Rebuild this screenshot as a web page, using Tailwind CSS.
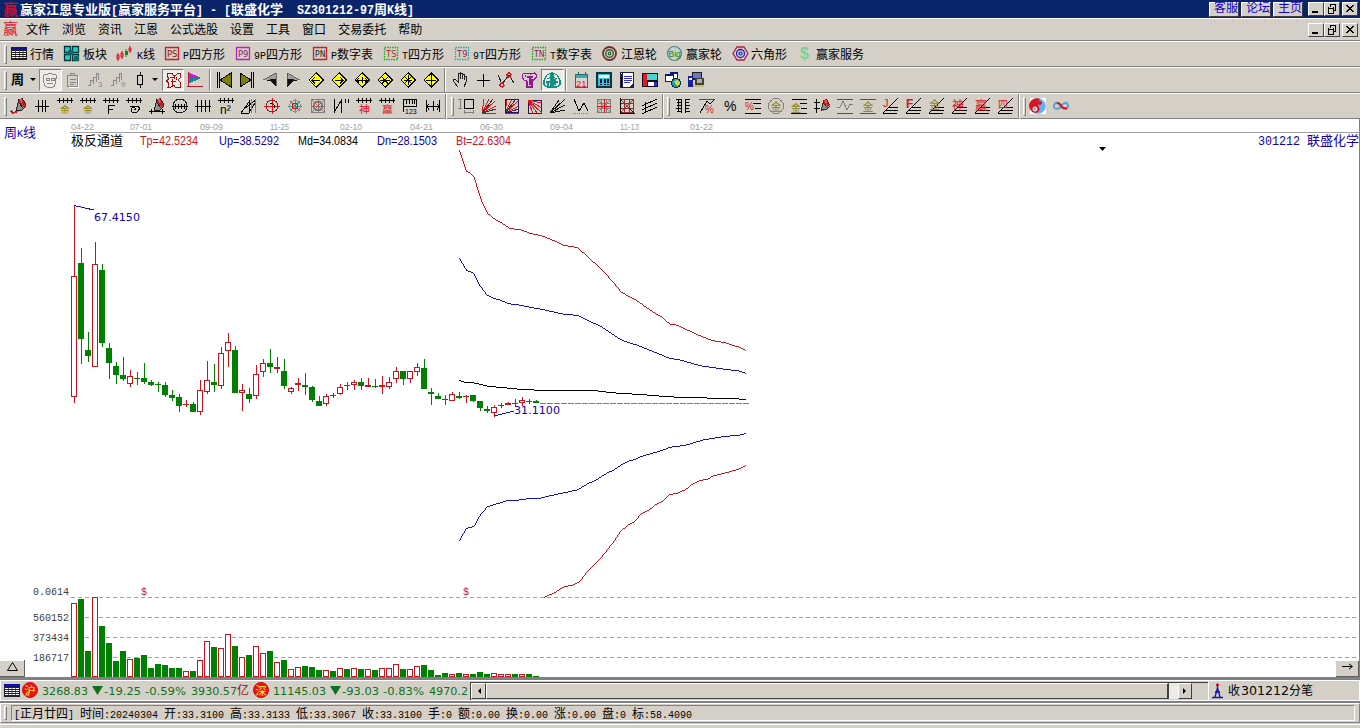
<!DOCTYPE html>
<html lang="zh-CN">
<head>
<meta charset="utf-8">
<title>赢家江恩专业版</title>
<script src="https://cdn.jsdelivr.net/npm/@tailwindcss/browser@4"></script>
</head>
<body class="w-[1360px] h-[728px] overflow-hidden bg-[#d4d0c8] font-['Liberation_Mono','Noto_Sans_CJK_SC',monospace] text-[12px] leading-none text-black">
<div class="flex h-[728px] flex-col">

  <!-- title bar -->
  <header class="flex h-[18px] shrink-0 items-center bg-[#0a246a] pl-[3px] pr-[2px] text-white">
    <svg class="h-[18px] w-[457px] overflow-visible" id="title"></svg>
    <div class="ml-auto flex items-center gap-[2px] text-[12px] leading-[14px] text-[#1400c8]">
      <span class="flex h-[15px] w-[30px] items-center justify-end border border-t-white border-l-white border-r-[#404040] border-b-[#404040] bg-[#d4d0c8]">客服</span>
      <span class="flex h-[15px] w-[30px] items-center justify-end border border-t-white border-l-white border-r-[#404040] border-b-[#404040] bg-[#d4d0c8]">论坛</span>
      <span class="flex h-[15px] w-[30px] items-center justify-end border border-t-white border-l-white border-r-[#404040] border-b-[#404040] bg-[#d4d0c8]">主页</span>
    </div>
    <div class="ml-[5px] flex" data-winbtns></div>
  </header>

  <!-- menu -->
  <nav class="flex h-[23px] shrink-0 items-center border-t border-b border-t-white border-b-[#808080] pl-[3px] pr-[2px]">
    <span class="w-[23px] pt-[2px] text-[15px] text-[#e01030]">赢</span>
    <div class="flex gap-[12px] pt-[3px]">
      <span>文件</span><span>浏览</span><span>资讯</span><span>江恩</span><span>公式选股</span><span>设置</span><span>工具</span><span>窗口</span><span>交易委托</span><span>帮助</span>
    </div>
    <div class="ml-auto flex" data-winbtns></div>
  </nav>

  <!-- module bar -->
  <div class="flex h-[26px] shrink-0 items-center border-t border-b border-t-white border-b-[#808080] pl-[4px]">
    <i class="h-[19px] w-[3px] border border-t-white border-l-white border-r-[#808080] border-b-[#808080]"></i>
    <svg class="h-[24px] w-[1100px] overflow-visible" id="modules"></svg>
  </div>

  <!-- tool rows -->
  <div class="flex h-[26px] shrink-0 items-center border-t border-b border-t-white border-b-[#808080] pl-[4px]">
    <i class="h-[19px] w-[3px] border border-t-white border-l-white border-r-[#808080] border-b-[#808080]"></i>
    <span class="ml-[4px] w-[17px] text-[13px] font-bold">周</span>
    <svg class="ml-[2px] mr-[3px] h-[4px] w-[6px]"><path d="M0 0h6L3 3z"/></svg>
    <span class="flex h-[22px] w-[23px] items-center justify-center border border-t-[#808080] border-l-[#808080] border-r-white border-b-white bg-[#ecebe6]" data-row="ghost"></span>
    <div class="flex" data-row="clip sig3 sig9"></div>
    <div class="-ml-[2px] flex w-[21px]" data-row="candle"></div>
    <svg class="ml-[2px] mr-[4px] h-[4px] w-[6px]"><path d="M0 0h6L3 3z"/></svg>
    <span class="flex h-[22px] w-[22px] items-center justify-center border border-t-[#808080] border-l-[#808080] border-r-white border-b-white bg-[#ecebe6]" data-row="face"></span>
    <div class="flex w-[25px]" data-row="flag"></div>
    <i class="h-[22px] w-[2px] border-l border-r border-l-[#808080] border-r-white"></i>
    <div class="ml-[2px] flex" data-row="first last prev next dl dr dh dx ds dv"></div>
    <i class="ml-[1px] h-[24px] w-[2px] border-l border-r border-l-[#808080] border-r-white"></i>
    <div class="ml-[3px] flex" data-row="hand plus zig robot"></div>
    <span class="flex h-[22px] w-[23px] items-center justify-center border border-t-[#808080] border-l-[#808080] border-r-white border-b-white bg-[#ecebe6]" data-row="brain"></span>
    <i class="ml-[1px] h-[22px] w-[2px] border-l border-r border-l-[#808080] border-r-white"></i>
    <div class="ml-[3px] flex" data-row="cal calc note disk globe pcs"></div>
  </div>

  <div class="flex h-[26px] shrink-0 items-center border-t border-b border-t-white border-b-[#808080] pl-[4px]">
    <i class="h-[19px] w-[3px] border border-t-white border-l-white border-r-[#808080] border-b-[#808080]"></i>
    <div class="ml-[1px] flex" data-row="pen hh goldh goldh2 fh spiral pencil circ hhh n2 tri tgt star web ii shen ying ruler width"></div>
    <i class="h-[25px] w-[2px] border-l border-r border-l-[#808080] border-r-white"></i>
    <i class="ml-[4px] h-[19px] w-[3px] border border-t-white border-l-white border-r-[#808080] border-b-[#808080]"></i>
    <div class="ml-px flex" data-row="box fanr fanbox fanbox2 fan wave grid grid2 chan"></div>
    <i class="h-[25px] w-[2px] border-l border-r border-l-[#808080] border-r-white"></i>
    <i class="ml-[3px] h-[19px] w-[3px] border border-t-white border-l-white border-r-[#808080] border-b-[#808080]"></i>
    <div class="ml-[3px] flex" data-row="bars pctr pct pctl goldc goldl penl wavl goldr lj lf lg ls ly l4"></div>
    <i class="h-[25px] w-[2px] border-l border-r border-l-[#808080] border-r-white"></i>
    <i class="ml-[3px] h-[19px] w-[3px] border border-t-white border-l-white border-r-[#808080] border-b-[#808080]"></i>
    <div class="ml-px flex" data-row="yin inf"></div>
  </div>

  <!-- chart -->
  <main class="h-[558px] shrink-0 border-r border-[#808080] bg-white">
    <svg class="block h-[558px] w-[1359px] overflow-visible" viewBox="0 119 1359 558" id="chart">
      <path d="M70 132.5H1359" stroke="#a0a0a0"/>
      <g id="dates" fill="#a0a0a0" font-family="Liberation Sans" font-size="9.5"></g>
      <path d="M71 597.5H1359M71 617.5H1359M71 637.5H1359M71 657.5H1359" stroke="#a0a0a0" stroke-dasharray="4 3"/>
      <path d="M540 403.5H749" stroke="#808080" stroke-dasharray="6 1"/>
      <g id="candles" shape-rendering="crispEdges"></g>
      <g transform="translate(440 130) scale(.33333)" fill="none" stroke-width="3" shape-rendering="crispEdges">
        <path stroke="#c8141e" d="M58 61L79 123L90 129L102 140L112 173L124 211L144 251L160 265L186 279L209 295L249 301L269 310L305 317L346 334L372 346L414 353L444 382L482 415L520 457L544 487L584 508L650 553L664 560L689 582L713 586L774 615L814 631L850 637L896 651L918 661"/>
        <path stroke="#1414aa" d="M58 384L79 420L102 431L120 467L142 496L160 505L180 510L205 521L245 526L270 532L305 538L346 547L372 553L412 556L440 570L480 588L510 608L548 632L590 645L640 665L689 685L720 690L780 707L850 717L896 723L918 730"/>
        <path stroke="#000" d="M58 751L76 757L103 759L145 769L190 773L230 777L300 781L465 782L505 787L550 791L600 793L655 798L700 801L760 802L800 804L850 805L918 808"/>
        <path stroke="#1414aa" d="M58 1232L79 1196L102 1189L120 1157L142 1130L160 1125L205 1111L240 1110L265 1106L300 1105L345 1094L412 1080L440 1063L470 1049L500 1030L525 1018L550 1001L570 992L584 989L605 979L665 962L689 952L735 946L790 930L850 920L900 915L918 911"/>
        <path stroke="#c8141e" d="M312 1403L345 1387L373 1370L398 1365L418 1356L440 1328L480 1288L500 1262L520 1237L542 1204L565 1185L584 1175L602 1153L628 1140L648 1123L670 1112L689 1094L715 1089L738 1078L757 1063L780 1052L803 1047L820 1038L870 1025L900 1016L918 1006"/>
      </g>
      <path d="M74 205.5L94 210M494 416L514 411" stroke="#1414aa" fill="none" shape-rendering="crispEdges"/>
      <g id="labels"></g>
      <path d="M1099 147h7l-3.500 4z"/>
      <g shape-rendering="crispEdges">
        <path d="M0 660h25v17H0z" fill="#d4d0c8"/><path d="M24.500 660v16.500H0" fill="none" stroke="#606060"/><path d="M0 660.500h24" stroke="#fff"/>
        <path d="M1336 661h23v16h-23z" fill="#d4d0c8"/><path d="M1358.500 661v15.500H1336" fill="none" stroke="#606060"/>
      </g>
      <path d="M7.500 670.500h10l-5-8zM1342 666.500h10M1349 664l3.500 2.500L1349 669" fill="none" stroke="#000"/>
    </svg>
  </main>

  <!-- ticker -->
  <section class="flex h-[26px] shrink-0 items-center border-t-[3px] border-b-2 border-[#808080] bg-[#d4d0c8]">
    <div class="flex h-[21px] w-full items-center border border-white pl-[1px]">
      <svg class="block h-[19px] w-[468px]" viewBox="2 681 468 19" id="ticker"></svg>
      <div class="flex h-[18px] w-[738px] items-center border-t border-l border-[#404040]">
        <span class="flex h-[16px] w-[15px] items-center justify-center border border-t-white border-l-white border-r-[#404040] border-b-[#404040]"><svg class="h-[6px] w-[4px]"><path d="M4 0v6L1 3z"/></svg></span>
        <span class="h-[16px] w-[683px] border border-r-2 border-t-white border-l-white border-r-[#404040] border-b-[#404040]"></span>
        <span class="h-[16px] w-[9px] bg-[#ecebe6]"></span>
        <span class="flex h-[16px] w-[14px] items-center justify-center border border-t-white border-l-white border-r-[#404040] border-b-[#404040]"><svg class="h-[6px] w-[4px]"><path d="M0 0v6L3 3z"/></svg></span>
      </div>
      <div class="flex h-[19px] flex-1 items-center border-l border-white">
        <svg class="block h-[19px] w-[145px]" viewBox="1209 681 145 19" id="tail"></svg>
      </div>
    </div>
  </section>

  <!-- status -->
  <footer class="flex h-[25px] shrink-0 flex-col">
    <div class="flex h-[20px] items-center border border-t-white border-l-white border-r-[#808080] border-b-[#808080] pl-[3px] pr-[4px]">
      <i class="h-[14px] w-[3px] border border-t-white border-l-white border-r-[#808080] border-b-[#808080]"></i>
      <div class="ml-[4px] flex h-[16px] flex-1 items-center border border-t-[#808080] border-l-[#808080] border-r-white border-b-white">
        <svg class="block h-[15px] w-[720px] overflow-visible" viewBox="12 706 720 15" id="status"></svg>
      </div>
    </div>
    <div class="mt-[1px] h-[2px] border-t border-white"></div>
  </footer>
</div>

<script>
const $ = id => document.getElementById(id);
// Fixed-pitch text run: half-width characters take h px, full-width ones w px.
function run(x, y, s, o = {}) {
  const { w = 12, h = 6, size = 12, fill = '#000', bold = '' } = o;
  let out = '';
  for (const part of s.match(/[\x21-\x7e]+|\x20+|[^\x20-\x7e]+/g)) {
    const half = part.charCodeAt(0) < 127, len = part.length * (half ? h : w);
    if (part.trim()) out += `<text x="${x}" y="${y}" font-size="${half ? (h === 7 ? 12.5 : 11.5) : size}" fill="${fill}" ${bold && 'font-weight="bold"'} textLength="${len}" lengthAdjust="spacingAndGlyphs" font-family="${half ? 'Liberation Mono' : 'Noto Sans CJK SC'}">${part}</text>`;
    x += len;
  }
  return out;
}
const sans = (x, y, s, len, fill, size = 12, fam = 'Liberation Sans') =>
  `<text x="${x}" y="${y}" font-size="${size}" font-family="${fam}" fill="${fill}" textLength="${len}" lengthAdjust="spacingAndGlyphs">${s}</text>`;

$('title').innerHTML = `<text x="0" y="14.500" font-size="15" font-weight="bold" font-family="Noto Sans CJK SC" fill="#c01038">赢</text>` +
  run(17, 14, '赢家江恩专业版[赢家服务平台] - [联盛化学  SZ301212-97周K线]', { w: 13, h: 7, size: 13, fill: '#fff', bold: 1 });

document.querySelectorAll('[data-winbtns]').forEach(e => {
  const b = (p, c) => `<span class="${c}"><svg class="block h-[12px] w-[13px]" shape-rendering="crispEdges" fill="none" stroke="#000">${p}</svg></span>`;
  e.innerHTML =
    b('<path d="M3 9h6" stroke-width="2"/>', 'h-[14px] w-[16px] border border-t-white border-l-white border-r-[#404040] border-b-[#404040] bg-[#d4d0c8]') +
    b('<path d="M5 1.500h6M5.500 1v3M10.500 2v5H9M3 5h6M3.500 4v6h5V4"/>', 'h-[14px] w-[16px] border border-t-white border-l-white border-r-[#404040] border-b-[#404040] bg-[#d4d0c8]') +
    b('<path d="M3.500 2l7 7M10.500 2l-7 7" stroke-width="1.5"/>', 'ml-[2px] h-[14px] w-[16px] border border-t-white border-l-white border-r-[#404040] border-b-[#404040] bg-[#d4d0c8]');
});

// ---- icons, drawn on a 16x16 field ----
const P = (d, c = '#000', w = 1, f = 'none') => `<path d="${d}" stroke="${c}" stroke-width="${w}" fill="${f}"/>`;
const F = (d, c) => `<path d="${d}" fill="${c}"/>`;
const T = (x, y, s, c, z = 9, b = '') => `<text x="${x}" y="${y}" font-size="${z}" fill="${c}" font-family="Liberation Sans, Noto Sans CJK SC" ${b}>${s}</text>`;
const C = (x, y, r, c, w = 1, f = 'none') => `<circle cx="${x}" cy="${y}" r="${r}" stroke="${c}" stroke-width="${w}" fill="${f}"/>`;
const O = '#8c8200', R = '#d8141e', G = '#808080';
const comb = P('M0 2.500h16M2.500 0v5M6.500 0v5M10.500 0v5M14.500 0v5');
const dia = p => F('M8 0l8 8-8 8-8-8z', '#000') + F('M8 1.200l6.800 6.800-6.800 6.800L1.200 8z', '#ffff00') + P(p);
const fanL = P('M0 15.500h14M3 12.500h12M6 9.500h9M0 15L15 0');
const pencil = F('M8 1l3-1 4 8-4 5-6 1z', '#909090') + F('M8 1l3-1 4 7-2 2-6-5z', '#d81820') + P('M8 1L5 13l6-1 4-4M11 0l4 7M8 5l4 5', '#202020') + F('M9 1h2l1 3-2 1z', '#ff5050');
const mesh = c => P('M1.500 1.500h13v13h-13zM5.500 1v14M10.500 1v14M1 5.500h14M1 10.500h14M1 1l14 14M15 1L1 15', c);
const fanr = P('M1 15L3 1M1 15L8 1M1 15L14 3M1 15L15 8M1 15.500h14', R) + P('M1 15L12 1M1 15L15 11', '#333');
const I = {
  ghost: P('M1 4q2-3 4-1 3-3 6 0 3-2 4 2l-2 3q2 3-1 5 2 2-1 2H5q-3 0-2-3-3-2-1-5zM4 6h3v2H4zM9 6h3v2H9zM5 11q3 2 6 0', '#888'),
  clip: P('M2.500 3.500h10v11h-10zM5.500 3V1.500h4V3M5 7.500h6M5 10.500h6M5 12.500h4', '#888') + P('M13.500 4v11.500H4', '#fff'),
  sig3: P('M0 13.500h2.500V8.500h3v3M5.500 11V5.500h3v4M8.500 7V1.500h2v6', '#888') + T(10, 15, '3', '#888', 8),
  sig9: P('M0 13.500h2.500V8.500h3v3M5.500 11V5.500h3v4M8.500 7V1.500h2v6', '#888') + T(10, 15, '9', '#888', 8),
  candle: P('M5.500 3.500h5v9h-5zM8.500 0v3M8.500 13v3'),
  face: P('M2 1h5l1 2h3l2-2h2v5l-2 2 2 2v5h-5l-1-2-3 2H3l1-4-3-2 3-2-2-3zM5 5l4 1M11 5v3M6 10l5-1M7 13V7M9 3l1 4', '#a01010'),
  flag: F('M1 0l13 6H1z', '#c818d0') + F('M1 6h13L1 12z', '#108890') + P('M1.500 0v14M0 14.500h16', '#c01830'),
  first: P('M1.500 0v16M3.500 0v16') + F('M15 1v14L4 8z', '#808000') + P('M15 1v14L4 8z'),
  last: P('M14.500 0v16M12.500 0v16') + F('M1 1v14l11-7z', '#808000') + P('M1 1v14l11-7z'),
  prev: F('M1 8l13-7v6z', '#a0a0a0') + F('M1 8L14 7v8L8 9z', '#101010') + P('M1 8L14 1v13', '#404040', .7),
  next: F('M15 8L2 1v6z', '#a0a0a0') + F('M15 8L2 7v8l6-6z', '#101010') + P('M15 8L2 1v13', '#404040', .7),
  dl: dia('M4 8.500h8M7 5L4 8.500l3 3'), dr: dia('M4 8.500h8M9 5l3 3.500-3 3'),
  dh: dia('M3 8.500h10M5 6L3 8.500l2 2M11 6l2 2.500-2 2M8.500 5v6'), dx: dia('M3 8.500h10M5 5l3 3.500-3 3M11 5L8 8.500l3 3'),
  ds: dia('M4 8.500h8M8.500 3v10M5 5l6 6M11 5l-6 6'), dv: dia('M3 8.500h10M8.500 2v12M6 4l2.500-2L11 4M6 12l2.500 2 2.500-2'),
  hand: P('M6 15L2 10 1 8l2-1 3 3V2l2-1v6V1l2 0v6V2h2v6V4h2v6l-2 5', '#202020'),
  plus: P('M8.500 2v13M2 8.500h13'),
  zig: P('M0 3l4 9 7-9 5 8', '#202020') + C(4, 13, 2, R, 1.2) + C(11, 3, 2, R, 1.2),
  robot: P('M2 2l4-1 3 1 5-1 2 3-3 4h-2v7H6V9L3 8 1 5zM6 5h6M9 5v8M4 4h1', '#901890', 1.2),
  brain: P('M7 1L3 3 0 8v5l3 2h4zM9 1l4 2 3 5v5l-3 2H9zM7 5L3 7M2 10h5M4 10v4M9 5l4 2M9 10h5M11 7v6', '#109080', 1.1),
  cal: F('M2 3h13v13H2z', '#d8d4d0') + F('M2 2h13v4H2z', '#30b0b0') + P('M2.500 2.500h12v13h-12zM5.500 0v3M12.500 0v3', '#306868') + T(3, 14.500, '21', R, 9.5),
  calc: F('M0 0h16v16H0z', '#003848') + F('M2 2h12v12H2z', '#40c0d0') + F('M3 3h10v3H3z', '#e0ffff') + P('M4 8h2M8 8h2M11 8h2M4 10h2M8 10h2M11 10h2M4 12.500h2M8 12.500h2M11 12.500h2', '#001840', 1.5),
  note: F('M1 0h14v16H1z', '#202040') + F('M4 1h10v11l-4 3H4z', '#fff') + P('M5 4.500h8M5 6.500h8M5 8.500h8M5 10.500h6', '#3030c0') + P('M2.500 1v14', '#fff') + P('M2.500 2v13', '#000'),
  disk: F('M0 1h16v14H0z', '#200818') + F('M1 2h4v12H1z', '#e01828') + F('M5 2h10v6H5z', '#40d8d0') + F('M6 10h6v4H6z', '#fff') + F('M12 10h3v4h-3z', '#2030c0'),
  globe: F('M0 2h8v8H0z', '#fff') + F('M5 0h7v6H5z', '#fff') + P('M.5 2.500h8v7h-8zM5.500.500h7v6M0 3h8M5 1h7', '#101880', 1.4) + C(11, 11, 4.5, '#003038', 1, '#20a0a0') + F('M9 9l4-1 2 3-3 3z', '#e0d040'),
  pcs: F('M4 0h10v8H4z', '#202020') + F('M5 1h8v5H5z', '#6878c0') + F('M0 4h5v11H0z', '#1820a0') + F('M1 6h3v2H1z', '#fff') + F('M7 6h9v7H7z', '#404040') + F('M9 7h5v4H9z', '#b0b0a0') + P('M5 14h11', '#c8c060', 2),
  pen: pencil + P('M0 13l2 2 4-1', R, 1.5),
  hh: P('M1 8.500h14M4.500 2v12M8.500 2v12M11.500 2v12'),
  goldh: comb + T(3, 15.500, '金', O, 10), goldh2: comb + T(3, 15.500, '金', O, 10),
  fh: comb + P('M5.500 16V7.500h6M5 11.500h5'), spiral: comb + P('M4 8h8q3 3-1 6-6 2-6-2 0-3 4-2 1 2-1 2'),
  pencil: pencil + P('M0 13.500h16M2.500 11v5M13.500 11v5'),
  circ: C(8, 8, 7, '#202020') + P('M0 8.500h16M3.500 6v5M6.500 6v5M9.500 6v5M12.500 6v5'),
  hhh: P('M0 8.500h16M2.500 2v12M6.500 2v12M10.500 2v12M14.500 2v12'), n2: comb + T(2, 16, 'n²', '#000', 12),
  tri: P('M0 15L8 4v11M3 11l12-9M8 15L15 3M0 15h8') + P('M10.500 1v14M14.500 1v14', G),
  tgt: C(8, 8, 6, '#802020') + P('M8.500 0v16M0 8.500h16', R) + P('M6 5q5 0 5 5'),
  star: P('M8.500 1v14M1 8.500h14M3 3l10 10M13 3L3 13', '#409090') + C(8, 8, 3, R) + C(8, 8, 5.5, '#909090'),
  web: P('M1.500 1.500h13v13h-13zM4.500 4.500h7v7h-7z', G) + C(8, 8, 5, '#409090') + P('M8.500 1v14M1 8.500h14M2 2l12 12M14 2L2 14', '#a05050', .8),
  ii: P('M1.500 1v14M8.500 3v12M2 13L9 1M12.500 1v4M15.500 1v4'),
  shen: comb + T(3, 16, '神', R, 11), ying: comb + T(3, 16, '赢', R, 11),
  ruler: P('M1.500 14V1.500h13V8M1 8.500h14M4.500 2v4M7.500 2v4M10.500 2v4M12.500 2v4') + T(3, 16, '123', '#000', 7),
  width: P('M1.500 2v12M14.500 2v12M8.500 3v10M2 8.500h12M4 6L2 8.500l2 3M12 6l2 2.500-2 3'),
  box: P('M6.500 1.500h9v9h-9z') + P('M2.500 1v10M0 1.500h4M0 10.500h4M6 14.500h10M6.500 12v4M15.500 12v4', G),
  fanr, fanbox: fanr + P('M1.500 1.500h13v13h-13z', '#301060'),
  fanbox2: P('M1.500 2.500h13v13h-13z', '#301060') + P('M1 2l5 14M1 2l9 13M1 2l14 13M1 2l14 8M1 2l14 3', R),
  fan: P('M0 15L15 1M0 15l15-8M0 15l15-3M0 15L9 2', '#101010'),
  wave: P('M1 1l5 12 5-8 4 8') + P('M0 15.500h16', G).replace('/>', ' stroke-dasharray="1 1"/>'),
  grid: mesh(G) + P('M8.500 1v14M1 8.500h14', R), grid2: mesh('#903030') + P('M1.500 0v15.500H16M15 15l-5-5', '#000'),
  chan: P('M0 8l15-7M0 12l15-7M0 16L15 9M3 4v10'),
  bars: P('M5.500 1v14M9.500 1v14M0 1.500h5M1 4.500h4M1 7.500h4M0 10.500h5M1 13.500h4M10 1.500h4M10 4.500h3M10 7.500h4M10 10.500h3M10 13.500h4M2.500 1v13'),
  pctr: P('M0 1.500h16', R) + P('M1 15L8 3l3 3 4-4') + T(6, 15, '%', R, 10), pct: T(2, 13, '%', '#000', 14),
  pctl: P('M0 1.500h16M8 5.500h8M10 10.500h6M0 15.500h16') + T(0, 12, '%', R, 10),
  goldc: C(8, 8, 7.5, G) + T(2.500, 12.500, '金', O, 11),
  goldl: P('M1 1.500h15M9 5.500h7M10 10.500h6M0 15.500h16') + T(0, 14, '金', O, 10),
  penl: P('M2.500 1v14M0 4.500h6M0 10.500h6') + `<g transform="translate(3 1) scale(.85)">${pencil}</g>`,
  wavl: P('M0 1.500h16M0 15.500h16', R) + P('M0 9h3l3-6 4 9 3-6h3', G),
  goldr: P('M0 1.500h16M0 15.500h16', R) + T(2.500, 12.500, '金', O, 11),
  lj: fanL + T(0, 9, 'J', R, 11), lf: fanL + T(0, 10, 'F', R, 12, 'font-weight="bold"'), lg: fanL + T(0, 11, '金', O, 11), ls: fanL + T(0, 12, '神', R, 12), ly: fanL + T(0, 12, '赢', R, 12), l4: fanL + T(0, 10, '四', R, 10),
  yin: F('M0 0h16v16H0z', '#fff') + C(8, 8, 7.5, '#60a8f0', .5, '#60b0f8') + F('M10 1A7.500 7.500 0 1 0 5 15q6-1 4-6-2-4 1-8z', R) + C(10, 5, 1.5, R, 1, R) + C(5, 11, 2, '#fff', 1, '#60b0f8'),
  inf: P('M8 8Q4 3 1.500 6q-2 4 2 5 3 0 4.500-3Q12 3 14.500 6q2 4-2 5-3 0-5-3', '#60a0d0', 2) + P('M4 5q3 0 5 4 2 2 5 1', R, 2),
};
const smooth = { yin: 1, inf: 1 };
const svg = n => `<svg class="block h-[16px] w-[23px] shrink-0" viewBox="-3 0 23 16" ${smooth[n] ? '' : 'shape-rendering="crispEdges"'}>${I[n]}</svg>`;
document.querySelectorAll('[data-row]').forEach(e => e.innerHTML = e.dataset.row.split(' ').map(svg).join(''));

// ---- module bar ----
const tag = (s, c, d, t) => `<path d="M.500 1.500h13v12h-13z" fill="none" stroke="${c}" stroke-width="1.3" ${d ? 'stroke-dasharray="1.500 1"' : ''}/>` + `<text x="2" y="11" font-size="8.5" textLength="10.500" lengthAdjust="spacingAndGlyphs" font-family="DejaVu Sans" fill="${t}">${s}</text>`;
const mods = [
  [11, F('M0 1h16v13H0z', '#202020') + F('M0 1h16v2.500H0z', '#1010a0') + P('M1 5.500h14M1 7.500h14M1 9.500h14M1 11.500h14', '#fff', 1.1) + P('M4.500 4v10M8.500 4v10M12 4v10', '#202020', .7), 30, '行情'],
  [64, P('M.5.500h6v6h-6zM8.500.500h6v6h-6zM.5 8.500h6v6h-6zM8.500 8.500h6v6h-6z', '#003838', 1.3, '#30c8c8') + F('M4 4h5v5H4zM10 10h5v5h-5z', '#106868'), 83, '板块'],
  [116, P('M2 7v8M6 5v8', R) + P('M10 3v8', '#109010') + P('M14 0v7', R) + P('M1 9h2v4H1zM5 7h2v4H5zM13 2h2v3h-2z', R) + F('M9 5h3v4H9z', '#109010'), 137, 'K线'],
  [165, tag('PS', '#c82020', 0, '#901010'), 183, 'P四方形'], [236, tag('P9', '#c020c0', 0, '#902060'), 254, '9P四方形'],
  [313, tag('PN', '#c82020', 0, '#202020'), 331, 'P数字表'], [384, tag('TS', '#10b010', 1, '#a03020'), 402, 'T四方形'],
  [455, tag('T9', '#10b0b0', 1, '#901840'), 473, '9T四方形'], [532, tag('TN', '#10b010', 1, '#901840'), 550, 'T数字表'],
  [602, C(7.500, 7.500, 6.500, '#703030', 1.8) + C(7.500, 7.500, 3.800, '#306030', 1.4) + C(7.500, 7.500, 1.300, '#306030', 1.2), 621, '江恩轮'],
  [667, C(7.500, 7.500, 7, '#508080', 1.200, '#c0d8d0') + T(1.500, 10.500, 'Big', '#208020', 8.5), 686, '赢家轮'],
  [733, P('M4 1h7l4 6.500-4 6.500H4L0 7.500z', '#b02040', 1.3) + C(7.500, 7.500, 4, '#2020c0', 1.3) + C(7.500, 7.500, 1.500, '#2020c0', 1.2), 751, '六角形'],
  [799, T(1, 13, '$', '#80d090', 16, 'font-weight="bold"'), 816, '赢家服务'],
];
$('modules').innerHTML = mods.map(([x, g, tx, s]) => `<g transform="translate(${x - 7} 4)">${g}</g>` + run(tx - 7, 17, s)).join('');

// ---- chart text ----
const B = '#1400a8';
$('dates').innerHTML = [[71, '04-22'], [130, '07-01'], [200, '09-09'], [270, '11-25'], [340, '02-10'], [410, '04-21'], [480, '06-30'], [550, '09-04'], [620, '11-13'], [690, '01-22']]
  .map(([x, s]) => `<text x="${x}" y="130" textLength="${s === '07-01' || s === '02-10' ? 22 : s[0] === '1' ? 19 : 23}" lengthAdjust="spacingAndGlyphs">${s}</text>`).join('');
$('labels').innerHTML =
  run(4, 137, '周K线', { w: 13, size: 13, fill: B }) + run(71, 145, '极反通道', { w: 13, size: 13 }) +
  sans(140, 145, 'Tp=42.5234', 58, '#c8141e') + sans(219, 145, 'Up=38.5292', 60, B) + sans(298, 145, 'Md=34.0834', 60, '#000') +
  sans(377, 145, 'Dn=28.1503', 60, B) + sans(456, 145, 'Bt=22.6304', 55, '#c8141e') +
  run(1258, 145, '301212 联盛化学', { w: 13, h: 7, size: 13, fill: B }) +
  sans(94, 221, '67.4150', 46, B, 11, 'DejaVu Sans') + sans(514, 414, '31.1100', 46, B, 11, 'DejaVu Sans') +
  run(33, 595, '0.0614', { fill: '#404040' }) + run(33, 621, '560152', { fill: '#404040' }) + run(33, 641, '373434', { fill: '#404040' }) + run(33, 661, '186717', { fill: '#404040' }) +
  run(141, 595, '$', { fill: '#c8141e' }) + run(463, 595, '$', { fill: '#c8141e' });

// ---- candles: direction, high, body top, body bottom, low, volume top ----
const D = `r 205 276 397 403 603|g 248 263 339 364 599|g 332 350 356 362 651|r 242 264 367 367 597|g 264 270 343 347 626|g 343 348 363 379 643|g 362 366 375 384 661|g 357 375 379 381 651|r 370 376 384 387 659|g 372 378 379 385 658|g 363 378 382 384 655|g 380 382 385 386 668|g 382 384 385 392 664|g 382 385 395 397 665|g 390 395 398 401 668|g 394 397 406 412 668|r 400 404 405 407 671|g 402 404 412 412 671|r 380 390 412 415 660|r 361 380 392 394 641|g 364 382 385 392 647|r 347 353 386 389 648|r 333 342 351 367 634|g 346 350 393 393 646|r 384 390 393 411 657|g 388 394 399 403 655|r 365 374 396 399 646|r 359 363 372 377 653|g 349 363 367 373 651|r 357 367 369 373 662|g 359 371 386 389 660|r 387 388 392 394 669|r 378 383 385 391 667|g 373 385 387 395 666|g 386 387 400 402 667|g 396 401 406 406 670|r 394 396 404 406 670|g 393 395 396 398 671|r 384 387 394 395 668|g 382 385 386 390 669|r 380 382 385 390 668|g 378 382 386 390 669|r 378 385 387 387 669|g 379 386 387 388 670|r 376 385 387 394 668|r 377 382 387 389 668|r 367 371 379 383 664|g 371 371 379 385 669|r 371 371 379 383 669|r 363 367 372 376 666|g 359 368 389 389 665|g 388 392 394 405 670|g 393 396 399 399 675|g 395 399 400 405 673|r 392 394 401 401 674|g 392 396 398 399 673|r 395 396 397 403 674|g 395 395 401 402 674|g 401 401 408 411 672|g 406 409 411 413 674|r 405 407 413 417 673|r 403 405 406 408 674|r 402 403 405 405 674|g 399 403 404 407 674|r 397 400 403 406 674|g 399 401 402 404 674|g 400 401 403 403 676`;
$('candles').innerHTML = D.split('|').map((r, i) => {
  const [k, ...n] = r.split(' '), [h, t, b, l, v] = n.map(Number), x = 74 + 7 * i, c = k === 'r' ? '#c8141e' : '#008000';
  const body = (t, b) => k === 'r' && b - t > 2
    ? `<rect x="${x - 2.500}" y="${t + .5}" width="5" height="${b - t - 1}" fill="#fff" stroke="${c}"/>`
    : `<rect x="${x - 3}" y="${t}" width="6" height="${b - t}" fill="${c}"/>`;
  return `<rect x="${x}" y="${h}" width="1" height="${l - h}" fill="${c}"/>` + body(t, b) + body(v, 677);
}).join('');

// ---- ticker and status ----
const V = (x, s, len) => sans(x, 695, s, len, '#107020', 11, 'DejaVu Sans');
const badge = (x, s) => C(x, 690, 7.500, '#d01010', 1, '#f01010') + T(x - 5.500, 694.500, s, '#ffff40', 11);
$('ticker').innerHTML = F('M4 684h16v13H4z', '#202030') + F('M4 684h16v2.500H4z', '#1010b0') + P('M5 688.500h14M5 690.500h14M5 692.500h14M5 694.500h14', '#fff', 1.1) + P('M8.500 687v9M12 687v9M15.500 687v9', '#202030', .7) +
  badge(30, '沪') + V(42, '3268.83', 46) + F('M92 686h11l-5.500 9z', '#107020') + V(104, '-19.25', 37) + V(145, '-0.59%', 41) + V(191, '3930.57', 46) + run(237, 695, '亿', { fill: '#901010' }) +
  badge(261, '深') + V(273, '11145.03', 53) + F('M330 686h11l-5.500 9z', '#107020') + V(342, '-93.03', 37) + V(383, '-0.83%', 41) + V(429, '4970.2', 39);
$('tail').innerHTML = P('M1217.500 684v5M1215 697l2.500-9 2.500 9M1212 697.500h11M1215 692h5', '#1414aa', 1.3) + C(1217.500, 685, 1.200, R) +
  run(1228, 695, '收', {}) + sans(1241, 695, '301212', 48, '#000', 12, 'DejaVu Sans') + run(1289, 695, '分笔', {});
$('status').innerHTML = run(14, 718, '[正月廿四] 时间:20240304 开:33.3100 高:33.3133 低:33.3067 收:33.3100 手:0 额:0.00 换:0.00 涨:0.00 盘:0 标:58.4090');
</script>
</body>
</html>
